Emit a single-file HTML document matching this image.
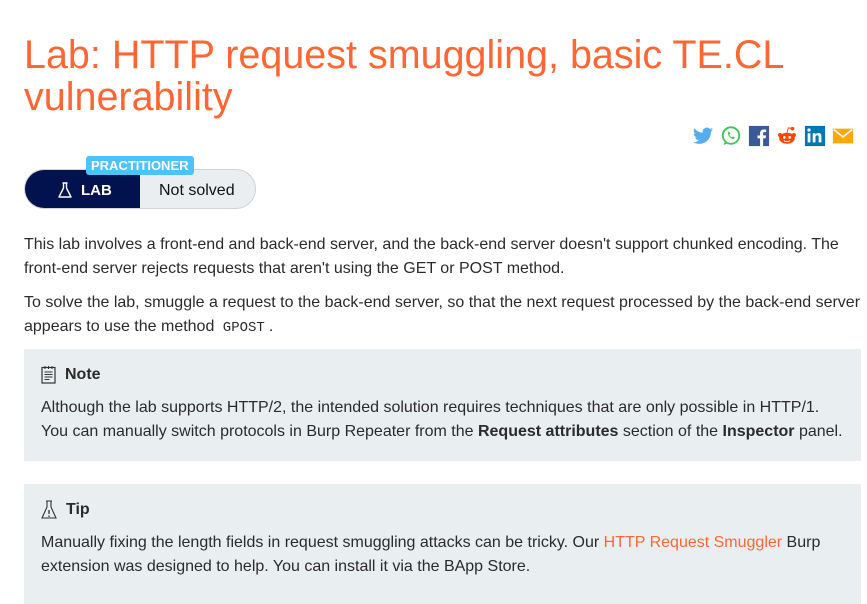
<!DOCTYPE html>
<html><head><meta charset="utf-8"><style>
body{margin:0;background:#fff;font-family:"Liberation Sans",sans-serif;color:#2b2b2b;width:867px;height:594px;overflow:hidden;position:relative}
h1{position:absolute;left:24px;top:34px;margin:0;font-weight:normal;font-size:39.5px;line-height:42px;color:#ff6633;width:830px}
.share{position:absolute;top:125px;left:692px;display:flex;gap:6px}
.share svg{width:22px;height:22px}
.badge{position:absolute;left:24px;top:169px;width:230px;height:38px;border:1px solid #cdd3d8;border-radius:20px;overflow:hidden;background:#eaeef1}
.badge .lab{position:absolute;left:0;top:0;width:115px;height:38px;background:#01124e;color:#fff;font-weight:bold;font-size:15px;line-height:42px}
.badge .ns{position:absolute;left:134px;top:1px;line-height:40px;font-size:16px;color:#111}
.prac{position:absolute;left:86px;top:156px;background:#4cc2ff;color:#fff;font-weight:bold;font-size:13px;padding:0 5px;height:19px;line-height:19px;border-radius:3px}
p{position:absolute;left:24px;margin:0;font-size:16px;line-height:24px;width:840px}
.box{position:absolute;left:24px;width:837px;background:#e9eef1}
.box h4{position:absolute;left:17px;margin:0;font-size:16px;font-weight:bold}
.box div{position:absolute;left:17px;font-size:16px;line-height:24px;width:805px}
code{font-family:"Liberation Mono",monospace;font-size:14px;padding:0 4px}
a{color:#ff6633;text-decoration:none}
</style></head><body>
<h1>Lab: HTTP request smuggling, basic TE.CL vulnerability</h1>
<div class="share">
<svg viewBox="0 0 24 24"><path fill="#55acee" d="M23 5c-.8.4-1.7.6-2.6.7.9-.6 1.6-1.4 2-2.5-.9.5-1.9.9-2.9 1.1A4.5 4.5 0 0 0 11.8 8.4 12.8 12.8 0 0 1 2.5 3.7a4.5 4.5 0 0 0 1.4 6c-.7 0-1.4-.2-2-.6 0 2.200 1.6 4 3.6 4.4-.7.2-1.4.2-2 .1.6 1.8 2.2 3.1 4.2 3.1A9 9 0 0 1 1 18.6 12.8 12.8 0 0 0 7.9 20.6c8.3 0 12.8-6.9 12.8-12.8v-.6c.9-.6 1.600-1.4 2.3-2.2z"/></svg>
<svg viewBox="0 0 24 24"><circle cx="12" cy="11.5" r="9" fill="none" stroke="#3fc552" stroke-width="2"/><path d="M4 22l1.5-5 3 2.8z" fill="#3fc552"/><path d="M8.5 8c.5-1 1.5-1 2 0l.5 1.5-1 1c.8 1.5 1.8 2.5 3 3l1-1 1.5.6c.8.5.5 1.6-.5 2-2.5.8-7-3.5-6.5-7.1z" fill="#3fc552"/></svg>
<svg viewBox="0 0 24 24"><rect x="1" y="1" width="22" height="22" fill="#3b5998"/><path d="M16.5 23v-8.5h2.8l.4-3.2h-3.2V9.4c0-.9.3-1.6 1.6-1.6h1.7V5c-.3 0-1.300-.1-2.5-.1-2.5 0-4.1 1.5-4.1 4.2v2.3H10.4v3.2h2.8V23z" fill="#fff"/></svg>
<svg viewBox="0 0 24 24"><ellipse cx="12" cy="14.5" rx="8.5" ry="6" fill="#ff4500"/><circle cx="4.5" cy="11" r="2.3" fill="#ff4500"/><circle cx="19.5" cy="11" r="2.3" fill="#ff4500"/><circle cx="18" cy="4" r="2" fill="#ff4500"/><path d="M12 8.5l1.5-5.5 4.5 1" stroke="#ff4500" fill="none"/><circle cx="9" cy="13.5" r="1.5" fill="#fff"/><circle cx="15" cy="13.5" r="1.5" fill="#fff"/><path d="M8.5 17c2 1.5 5 1.5 7 0" stroke="#fff" fill="none"/></svg>
<svg viewBox="0 0 24 24"><rect x="1" y="1" width="22" height="22" fill="#0077b5"/><rect x="4" y="9" width="3" height="10" fill="#fff"/><circle cx="5.5" cy="5.5" r="1.8" fill="#fff"/><path d="M9.5 9h3v1.5c.6-1 1.7-1.8 3.3-1.8 2.7 0 3.2 1.8 3.2 4.2V19h-3v-5.5c0-1.300-.2-2.300-1.500-2.300s-2 1-2 2.300V19h-3z" fill="#fff"/></svg>
<svg viewBox="0 0 24 24"><rect x="1" y="4" width="22" height="16" fill="#ffa800"/><path d="M2 5l10 8 10-8" stroke="#fff" stroke-width="1.8" fill="none"/></svg>
</div>
<div class="badge"><div class="lab"><svg style="position:absolute;left:32px;top:12px" width="16" height="17" viewBox="0 0 16 17"><path d="M5.5 1h5M6.5 1v5L2 15h12L9.5 6V1" stroke="#fff" stroke-width="1.4" fill="none" stroke-linejoin="round"/></svg><span style="position:absolute;left:56px">LAB</span></div><span class="ns">Not solved</span></div>
<div class="prac">PRACTITIONER</div>
<p style="top:233px">This lab involves a front-end and back-end server, and the back-end server doesn't support chunked encoding. The front-end server rejects requests that aren't using the GET or POST method.</p>
<p style="top:291px">To solve the lab, smuggle a request to the back-end server, so that the next request processed by the back-end server appears to use the method <code>GPOST</code>.</p>
<div class="box" style="top:349px;height:112px">
<svg style="position:absolute;left:17px;top:16px" width="15" height="19" viewBox="0 0 15 19"><rect x="1" y="2.5" width="13" height="15.5" fill="none" stroke="#333" stroke-width="1.2"/><path d="M4 1v3M7.5 1v3M11 1v3M3.5 7h8M3.5 9.5h8M3.5 12h8M3.5 14.5h5" stroke="#333" stroke-width="1"/></svg>
<h4 style="left:41px;top:17px">Note</h4>
<div style="top:47px">Although the lab supports HTTP/2, the intended solution requires techniques that are only possible in HTTP/1.<br>You can manually switch protocols in Burp Repeater from the <b>Request attributes</b> section of the <b>Inspector</b> panel.</div>
</div>
<div class="box" style="top:484px;height:120px">
<svg style="position:absolute;left:17px;top:16px" width="16" height="19" viewBox="0 0 16 19"><path d="M5 1h6M6 1v6L1 18h14L10 7V1" stroke="#333" stroke-width="1.1" fill="none"/><path d="M8 10v4M8 15.5v1.5" stroke="#333" stroke-width="1.3"/></svg>
<h4 style="left:42px;top:17px">Tip</h4>
<div style="top:47px">Manually fixing the length fields in request smuggling attacks can be tricky. Our <a>HTTP Request Smuggler</a> Burp extension was designed to help. You can install it via the BApp Store.</div>
</div>
</body></html>
